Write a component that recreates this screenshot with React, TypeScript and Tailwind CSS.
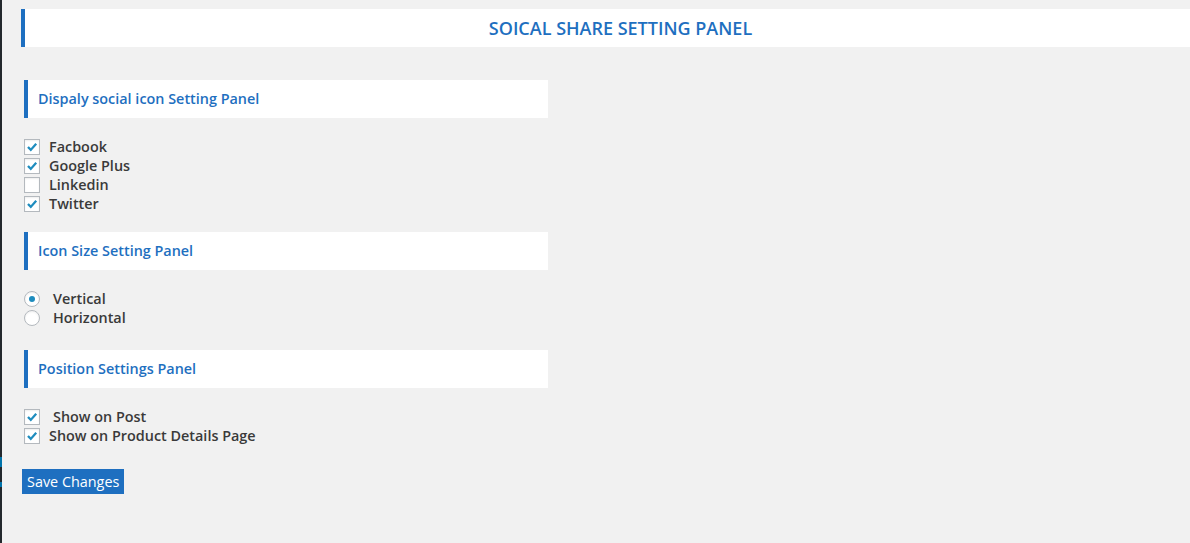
import React from "react";

const Check = ({ checked }: { checked: boolean }) => (
  <span className="inline-flex h-4 w-4 shrink-0 items-center justify-center border border-[#b4b9be] bg-white shadow-[inset_0_1px_2px_rgba(0,0,0,0.07)]">
    {checked && (
      <svg viewBox="0 0 16 16" className="h-4 w-4">
        <path d="M3.4 8 L6.6 11.3 L12.8 4.2" fill="none" stroke="#1e8cbe" strokeWidth="2.6" />
      </svg>
    )}
  </span>
);

const Radio = ({ checked }: { checked: boolean }) => (
  <span className="inline-flex h-4 w-4 shrink-0 items-center justify-center rounded-full border border-[#b4b9be] bg-white shadow-[inset_0_1px_2px_rgba(0,0,0,0.07)]">
    {checked && <span className="h-[6px] w-[6px] rounded-full bg-[#1e8cbe]" />}
  </span>
);

const PanelHead = ({ title }: { title: string }) => (
  <div className="flex h-[38px] w-[524px] items-center border-l-4 border-[#1e6fc0] bg-white pl-[10px] text-[14.4px] font-semibold text-[#1e6fc0]">
    {title}
  </div>
);

const Row = ({ children, label, gap = "gap-[9px]" }: { children: React.ReactNode; label: string; gap?: string }) => (
  <label className={`flex h-[19px] items-center ${gap} text-[14.4px] leading-[19px] font-semibold text-[#3a3a3a]`}>
    {children}
    <span>{label}</span>
  </label>
);

export default function App() {
  return (
    <div className="flex min-h-[543px] bg-[#f1f1f1] font-['Open_Sans',sans-serif]">
      <div className="flex w-[2px] shrink-0 flex-col bg-[#23282d]">
        <div className="h-[457px]" />
        <div className="h-[10px] bg-[#0073aa]" />
        <div className="h-[15px]" />
        <div className="h-[5px] bg-[#0073aa]" />
      </div>

      <div className="flex-1">
        <div className="ml-[19px] mt-[9px] flex h-[38px] items-center justify-center border-l-4 border-[#1e6fc0] bg-white pl-[26px] text-[18px] font-semibold text-[#1e6fc0]">
          SOICAL SHARE SETTING PANEL
        </div>

        <div className="ml-[22px] mt-[33px]">
          <PanelHead title="Dispaly social icon Setting Panel" />
          <div className="mt-[19px] flex flex-col">
            <Row label="Facbook"><Check checked /></Row>
            <Row label="Google Plus"><Check checked /></Row>
            <Row label="Linkedin"><Check checked={false} /></Row>
            <Row label="Twitter"><Check checked /></Row>
          </div>

          <div className="mt-[19px]">
            <PanelHead title="Icon Size Setting Panel" />
          </div>
          <div className="mt-[19px] flex flex-col">
            <Row label="Vertical" gap="gap-[13px]"><Radio checked /></Row>
            <Row label="Horizontal" gap="gap-[13px]"><Radio checked={false} /></Row>
          </div>

          <div className="mt-[23px]">
            <PanelHead title="Position Settings Panel" />
          </div>
          <div className="mt-[19px] flex flex-col">
            <Row label="Show on Post" gap="gap-[13px]"><Check checked /></Row>
            <Row label="Show on Product Details Page"><Check checked /></Row>
          </div>
        </div>

        <button className="ml-[20px] mt-[24px] block h-[25px] bg-[#1e6fc0] px-[5px] text-[14.4px] leading-[25px] text-white">
          Save Changes
        </button>
      </div>
    </div>
  );
}
